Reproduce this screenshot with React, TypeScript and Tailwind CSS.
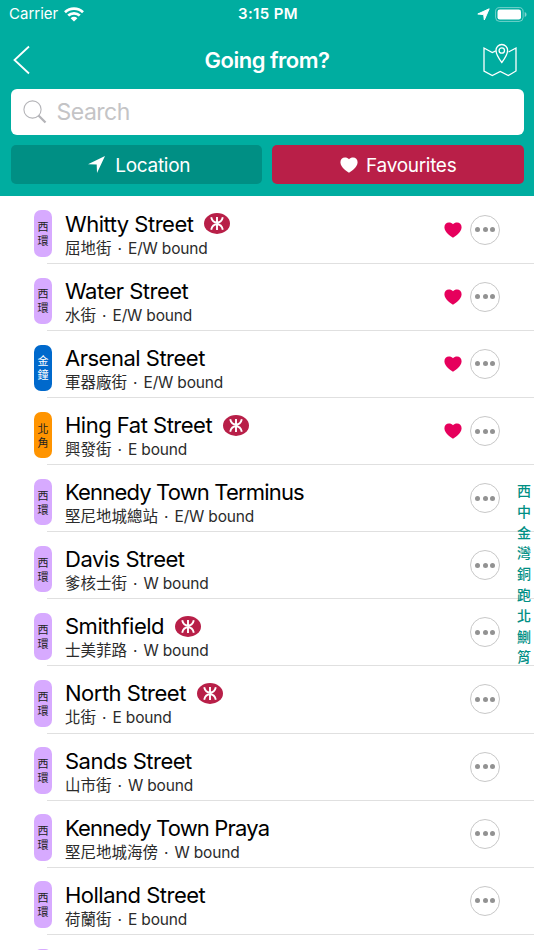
import clsx from 'clsx';

interface Stop {
  name: string;
  chinese: string;
  direction: 'E' | 'W' | 'E/W';
  zone: keyof typeof zones;
  mtr?: boolean;
  favourite?: boolean;
}

const zones = {
  west: { chars: ['西', '環'], className: 'bg-[#d7aaff] text-[#222]' },
  admiralty: { chars: ['金', '鐘'], className: 'bg-[#0069cc] text-white' },
  north: { chars: ['北', '角'], className: 'bg-[#ff9400] text-[#222]' },
};

const stops: Stop[] = [
  { name: 'Whitty Street', chinese: '屈地街', direction: 'E/W', zone: 'west', mtr: true, favourite: true },
  { name: 'Water Street', chinese: '水街', direction: 'E/W', zone: 'west', favourite: true },
  { name: 'Arsenal Street', chinese: '軍器廠街', direction: 'E/W', zone: 'admiralty', favourite: true },
  { name: 'Hing Fat Street', chinese: '興發街', direction: 'E', zone: 'north', mtr: true, favourite: true },
  { name: 'Kennedy Town Terminus', chinese: '堅尼地城總站', direction: 'E/W', zone: 'west' },
  { name: 'Davis Street', chinese: '爹核士街', direction: 'W', zone: 'west' },
  { name: 'Smithfield', chinese: '士美菲路', direction: 'W', zone: 'west', mtr: true },
  { name: 'North Street', chinese: '北街', direction: 'E', zone: 'west', mtr: true },
  { name: 'Sands Street', chinese: '山市街', direction: 'W', zone: 'west' },
  { name: 'Kennedy Town Praya', chinese: '堅尼地城海傍', direction: 'W', zone: 'west' },
  { name: 'Holland Street', chinese: '荷蘭街', direction: 'E', zone: 'west' },
];

const sections = ['西', '中', '金', '灣', '銅', '跑', '北', '鰂', '筲'];

function Heart({ className }: { className: string }) {
  return (
    <svg className={className} viewBox="0 0 18 16" fill="currentColor">
      <path d="M9 15.700C7.800 15.200.4 10.400.4 5.300.4 2.600 2.400.6 4.900.6 6.600.6 8.100 1.100 9 2.200 9.900 1.100 11.400.6 13.100.6c2.500 0 4.500 2 4.500 4.700C17.600 10.400 10.200 15.200 9 15.700Z" />
    </svg>
  );
}

function LocationArrow({ className }: { className: string }) {
  return (
    <svg className={className} viewBox="0 0 17 17" fill="currentColor">
      <path d="M17 0 9 17 8.700 8.600 0 8.200Z" />
    </svg>
  );
}

function MtrLogo() {
  return (
    <svg className="h-[21px] w-[26px]" viewBox="0 0 26 21" fill="none">
      <ellipse cx="13" cy="10.500" rx="13" ry="10.400" fill="#b81f48" />
      <path
        d="M13 4v13M7.200 4.300C8 7.800 10 9.700 13 9.700s5-1.900 5.800-5.400M7.200 16.700c.8-3.500 2.800-5.400 5.800-5.400s5 1.900 5.800 5.400"
        stroke="#fff"
        strokeWidth="1.900"
      />
    </svg>
  );
}

function StatusBar() {
  return (
    <div className="grid h-7 grid-cols-3 items-center pl-[9px] pr-[7px] text-[15px]">
      <div className="flex items-center gap-1.5">
        <span>Carrier</span>
        <svg className="h-[15px] w-5" viewBox="0 0 20 15" fill="none" stroke="#fff" strokeWidth="2.700">
          <path d="M1 5.200a13 13 0 0 1 18 0M4.200 8.600a8.400 8.400 0 0 1 11.600 0" />
          <path d="M10 14.500 6.600 11.200a4.900 4.900 0 0 1 6.800 0Z" fill="#fff" stroke="none" />
        </svg>
      </div>
      <span className="text-center font-semibold tracking-[0.35px]">3:15 PM</span>
      <div className="flex items-center justify-end gap-[5px]">
        <svg className="size-[13px]" viewBox="0 0 13 13" fill="#fff" stroke="#fff" strokeLinejoin="round">
          <path d="M12.200.8 7.300 12 6.700 6.600.8 6Z" />
        </svg>
        <svg className="h-[15px] w-8" viewBox="0 0 32 15">
          <rect x=".6" y=".6" width="27.500" height="13.800" rx="4" fill="none" stroke="#fff" strokeOpacity=".45" />
          <rect x="2.500" y="2.500" width="23.500" height="10" rx="2.300" fill="#fff" />
          <path d="M29.700 5v5c1.200-.5 1.800-1.500 1.800-2.500s-.6-2-1.800-2.500Z" fill="#fff" fillOpacity=".5" />
        </svg>
      </div>
    </div>
  );
}

function Header() {
  return (
    <header className="h-[196px] shrink-0 bg-[#00ada0] text-white">
      <StatusBar />
      <div className="flex h-[60.500px] items-center justify-between pl-[13px] pr-[17px] pt-[4px]">
        <svg className="h-[30px] w-9" viewBox="0 0 36 30" fill="none" stroke="#fff" strokeWidth="1.800">
          <path d="M16 1.500 1.500 15 16 28.500" />
        </svg>
        <h1 className="pl-0.5 text-[22px] font-semibold tracking-[-0.5px]">Going from?</h1>
        <svg className="h-[34px] w-[34px]" viewBox="0 0 34 34" fill="none" stroke="#fff" strokeWidth="1.300">
          <path d="M12.800 7.800 9.300 9.500 1 5v23l8.300 4.500 8-4 8 4 7.700-4.500V5l-7.500 4" />
          <path d="M18.800 19.500C16 15.800 13 11.200 13 7.300a5.800 5.800 0 0 1 11.600 0c0 3.900-3 8.500-5.800 12.200Z" />
          <circle cx="18.800" cy="7.500" r="2.700" />
        </svg>
      </div>
      <div className="mx-[10.500px] flex h-[46.500px] items-center gap-2.5 rounded-md bg-white pl-3 text-[#c4c4c6]">
        <svg className="size-6" viewBox="0 0 24 24" fill="none" stroke="#b4b4b8">
          <circle cx="9.500" cy="9.500" r="8.600" strokeWidth="1.100" />
          <path d="m15.500 15.500 7 7" strokeWidth="2.300" />
        </svg>
        <span className="text-[23px] tracking-[-0.5px]">Search</span>
      </div>
      <div className="mx-[10.500px] mt-2.5 grid grid-cols-2 gap-2.5 text-[19px] tracking-[-0.3px]">
        <button className="flex h-[39px] items-center justify-center gap-2.5 rounded-[5px] bg-[#008f84] pl-1.5">
          <LocationArrow className="size-[17px]" />
          <span className="pt-[3px]">Location</span>
        </button>
        <button className="flex h-[39px] items-center justify-center gap-2 rounded-[5px] bg-[#b91f48] pl-px">
          <Heart className="h-4 w-[18px]" />
          <span className="pt-[3px]">Favourites</span>
        </button>
      </div>
    </header>
  );
}

function ZoneTag({ zone, empty }: { zone: Stop['zone']; empty?: boolean }) {
  const { chars, className } = zones[zone];
  return (
    <div
      className={clsx(
        'mr-[13px] mt-[13.700px] flex h-[46.500px] w-[18px] shrink-0 flex-col items-center justify-center rounded-[7px] pt-px text-[11px] leading-[14px]',
        className
      )}
    >
      {!empty && chars.map(char => <span key={char}>{char}</span>)}
    </div>
  );
}

function StopRow({ stop }: { stop: Stop }) {
  return (
    <li className="h-[67.100px] shrink-0">
      <div className="flex h-[66.100px] px-[34px]">
        <ZoneTag zone={stop.zone} />
        <div className="min-w-0 flex-1 pt-[13px]">
          <div className="flex items-center gap-[11px]">
            <h2
              className={clsx(
                'text-[22px] leading-[28px] text-black',
                stop.name.length > 15 ? 'tracking-[-0.83px]' : 'tracking-[-0.5px]'
              )}
            >
              {stop.name}
            </h2>
            {stop.mtr && <MtrLogo />}
          </div>
          <p className="flex text-[15.500px] leading-[21px] text-[#2b2b2b]">
            <span>{stop.chinese}</span>
            <span className="w-[16.500px] text-center">·</span>
            <span className="tracking-[-0.180px]">{stop.direction} bound</span>
          </p>
        </div>
        <div className="flex items-center gap-2 self-start pt-[18px]">
          {stop.favourite && <Heart className="h-4 w-[18px] text-[#e6005c]" />}
          <button className="flex size-[30px] items-center justify-center gap-[2.500px] rounded-full border border-[#c8c8c8]">
            <span className="size-[5px] rounded-full bg-[#929292]" />
            <span className="size-[5px] rounded-full bg-[#929292]" />
            <span className="size-[5px] rounded-full bg-[#929292]" />
          </button>
        </div>
      </div>
      <div className="ml-[47px] h-px bg-[#e0e0e0]" />
    </li>
  );
}

export default function App() {
  return (
    <div className="relative flex h-[950px] w-[534px] flex-col overflow-hidden bg-white font-['Inter','Noto_Sans_CJK_TC',sans-serif]">
      <Header />
      <ul className="flex flex-col pt-[0.800px]">
        {stops.map(stop => (
          <StopRow key={stop.name} stop={stop} />
        ))}
        <li className="flex pl-[34px]">
          <ZoneTag zone="west" empty />
        </li>
      </ul>

      {/* Section index floating over the list */}
      <nav className="absolute right-[3px] top-[481px] flex flex-col text-[14px] font-medium leading-[20.800px] text-[#008f84]">
        {sections.map(section => (
          <span key={section}>{section}</span>
        ))}
      </nav>
    </div>
  );
}
